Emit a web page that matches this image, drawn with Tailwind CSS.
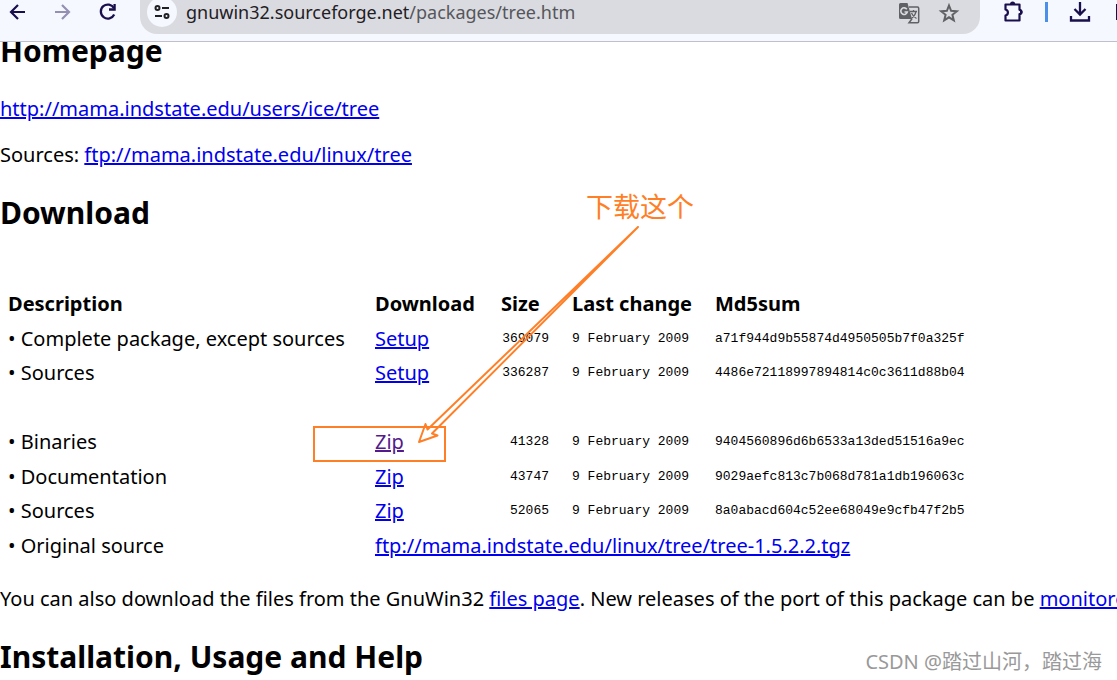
<!DOCTYPE html>
<html lang="en">
  <head>
    <meta charset="UTF-8" />
    <meta name="viewport" content="width=device-width, initial-scale=1.0" />
    <title>Tree for Windows</title>
    <script src="https://cdn.jsdelivr.net/npm/@tailwindcss/browser@4"></script>
  </head>
  <body class="relative h-screen overflow-hidden bg-white text-black text-[20px] leading-[28px] font-['Noto_Sans','Noto_Sans_CJK_SC',sans-serif]">
    <!-- Browser toolbar -->
    <header class="relative z-10 flex h-[42px] items-start border-b border-[#bfc0cc] bg-[#f5f8fe] text-[#190f4d]">
      <div class="flex h-6 w-[140px] shrink-0 items-center gap-[21px] pl-[6px]">
        <button aria-label="Back">
          <svg class="size-6" viewBox="0 0 24 24" fill="none" stroke="currentColor" stroke-width="2.2"><path d="M19 12H5.500M12 5l-7 7 7 7" /></svg>
        </button>
        <button aria-label="Forward" class="text-[#9590b3]">
          <svg class="size-6" viewBox="0 0 24 24" fill="none" stroke="currentColor" stroke-width="2.2"><path d="M4 12h13.500M11 5l7 7-7 7" /></svg>
        </button>
        <button aria-label="Reload">
          <svg class="size-6" viewBox="0 0 24 24" fill="none" stroke="currentColor" stroke-width="2.300"><path d="M18 8.200A7 7 0 1 0 18.200 14.500" /><path d="M18.600 4v5.500H13" /></svg>
        </button>
      </div>
      <div class="flex h-[34px] min-w-0 flex-1 items-start rounded-b-[17px] bg-[#dadbe0] pr-[20px] pl-[7px]">
        <button aria-label="View site information" class="-mt-[3px] flex size-[30px] shrink-0 items-center justify-center rounded-full bg-[#f5f8fe] text-[#202124]">
          <svg class="h-5 w-[18px]" viewBox="0 0 18 20" fill="none" stroke="currentColor" stroke-width="2"><circle cx="4.500" cy="6" r="2" /><path d="M9 6h7M2 14h7" /><circle cx="13.500" cy="14" r="2" /></svg>
        </button>
        <input type="text" aria-label="Address" value="gnuwin32.sourceforge.net/packages/tree.htm" class="sr-only" />
        <p class="min-w-0 flex-1 pl-[9px] text-[18px] leading-[25px] text-[#55565b]"><span class="text-[#1f2024]">gnuwin32.sourceforge.net</span>/packages/tree.htm</p>
        <div class="flex h-[26px] items-center gap-[18px] text-[#606164]">
          <button aria-label="Translate this page">
            <svg class="h-[22px] w-[22px]" viewBox="0 0 22 22" fill="none"><path fill="currentColor" d="M2.500 1h7l4.500 16H2.500A1.500 1.500 0 0 1 1 15.500V2.500A1.500 1.500 0 0 1 2.500 1z" /><path d="M11 5h8.500a1.200 1.200 0 0 1 1.200 1.200v13.300a1.200 1.200 0 0 1-1.200 1.200H11l3-4" stroke="currentColor" stroke-width="1.500" /><path d="M8.800 7.200A3.300 3.300 0 1 0 9.300 10H6.500" stroke="#dadbe0" stroke-width="1.600" /><path d="M12 9.500h7M15.500 8v1.500M18 9.500c-.5 3-2 5-4.500 7M13.500 11c1 2.500 2.500 4 5 5.500" stroke="currentColor" stroke-width="1.300" /></svg>
          </button>
          <button aria-label="Bookmark this page">
            <svg class="size-[22px]" viewBox="0 0 22 22" fill="none" stroke="currentColor" stroke-width="2"><path d="M11 3.500l2.100 5.300 5.700.4-4.400 3.600 1.400 5.500-4.800-3-4.800 3 1.400-5.500-4.400-3.600 5.700-.4z" /></svg>
          </button>
        </div>
      </div>
      <div class="flex h-6 w-[137px] shrink-0 items-center overflow-hidden pl-[21px]">
        <button aria-label="Extensions">
          <svg class="size-6" viewBox="0 0 24 24"><path d="M4.500 4.500h14v5.300c2.500.2 2.500 4.200 0 4.400v6.300h-14v-5c3.200-.8 3.200-5.200 0-6z" fill="none" stroke="currentColor" stroke-width="2.200" stroke-linejoin="round" /><path fill="currentColor" d="M9 4a2.600 2.600 0 0 1 5.200 0zM19 9.400a2.600 2.600 0 0 1 0 5.200z" /></svg>
        </button>
        <span class="ml-[20px] h-5 w-[3px] shrink-0 bg-[#4a90e8]"></span>
        <button aria-label="Downloads" class="ml-[20px]">
          <svg class="size-6" viewBox="0 0 24 24" fill="none" stroke="currentColor" stroke-width="2.300"><path d="M12 2v12M6.500 9l5.500 5.500L17.500 9M3 16v4.500h18V16" /></svg>
        </button>
        <span class="ml-[24px] h-4 w-[2px] shrink-0 bg-[#190f4d]"></span>
      </div>
    </header>

    <main class="-mt-[13px]">
      <h1 class="text-[30px] leading-[44px] font-bold">Homepage</h1>
      <p class="mt-[22px]"><a href="http://mama.indstate.edu/users/ice/tree" class="text-[#0000ee] underline">http://mama.indstate.edu/users/ice/tree</a></p>
      <p class="mt-[18px]">Sources: <a href="ftp://mama.indstate.edu/linux/tree" class="text-[#0000ee] underline">ftp://mama.indstate.edu/linux/tree</a></p>
      <h1 class="mt-[22px] text-[30px] leading-[44px] font-bold">Download</h1>

      <table class="mt-[52px] h-[276px] w-full table-fixed text-left [&_tr]:h-[34px] [&_td]:px-2 [&_td]:py-0 [&_th]:px-2 [&_th]:py-0">
        <colgroup>
          <col class="w-[367px]" />
          <col class="w-[126px]" />
          <col class="w-[71px]" />
          <col class="w-[143px]" />
          <col />
        </colgroup>
        <tbody class="whitespace-nowrap [&_.mono]:font-['Liberation_Mono',monospace] [&_.mono]:text-[13px]">
          <tr><th>Description</th><th>Download</th><th>Size</th><th>Last change</th><th>Md5sum</th></tr>
          <tr><td>• Complete package, except sources</td><td><a href="#" class="text-[#0000ee] underline">Setup</a></td><td class="mono"><div class="pr-[7px] text-right">369079</div></td><td class="mono">9 February 2009</td><td class="mono">a71f944d9b55874d4950505b7f0a325f</td></tr>
          <tr><td>• Sources</td><td><a href="#" class="text-[#0000ee] underline">Setup</a></td><td class="mono"><div class="pr-[7px] text-right">336287</div></td><td class="mono">9 February 2009</td><td class="mono">4486e72118997894814c0c3611d88b04</td></tr>
          <tr><td colspan="5">&nbsp;</td></tr>
          <tr><td>• Binaries</td><td><a href="#" class="text-[#551a8b] underline">Zip</a></td><td class="mono"><div class="pr-[7px] text-right">41328</div></td><td class="mono">9 February 2009</td><td class="mono">9404560896d6b6533a13ded51516a9ec</td></tr>
          <tr><td>• Documentation</td><td><a href="#" class="text-[#0000ee] underline">Zip</a></td><td class="mono"><div class="pr-[7px] text-right">43747</div></td><td class="mono">9 February 2009</td><td class="mono">9029aefc813c7b068d781a1db196063c</td></tr>
          <tr><td>• Sources</td><td><a href="#" class="text-[#0000ee] underline">Zip</a></td><td class="mono"><div class="pr-[7px] text-right">52065</div></td><td class="mono">9 February 2009</td><td class="mono">8a0abacd604c52ee68049e9cfb47f2b5</td></tr>
          <tr><td>• Original source</td><td colspan="4"><a href="#" class="text-[#0000ee] underline">ftp://mama.indstate.edu/linux/tree/tree-1.5.2.2.tgz</a></td></tr>
        </tbody>
      </table>

      <p class="mt-[22px] whitespace-nowrap">You can also download the files from the GnuWin32 <a href="#" class="text-[#0000ee] underline">files page</a>. New releases of the port of this package can be <a href="#" class="text-[#0000ee] underline">monitored</a></p>
      <h1 class="mt-[22px] text-[30px] leading-[44px] font-bold">Installation, Usage and Help</h1>
    </main>

    <!-- Annotations drawn over the page -->
    <p class="absolute top-[187px] left-[586px] text-[27px] leading-[40px] text-[#ff7f27]">下载这个</p>
    <div class="absolute top-[426px] left-[313px] h-9 w-[133px] border-2 border-[#ff7f27]"></div>
    <svg class="absolute top-[220px] left-[410px] h-[230px] w-[240px]" viewBox="410 220 240 230" fill="none" stroke="#ff7f27" stroke-width="2" stroke-linejoin="round">
      <path d="M638 227L427.500 429.500 425.500 424 419 442 437.500 435.500 432 433.500z" />
    </svg>
    <p class="absolute right-[15px] bottom-[4px] text-[20px] leading-[28px] text-[#999999]">CSDN @踏过山河，踏过海</p>
  </body>
</html>
